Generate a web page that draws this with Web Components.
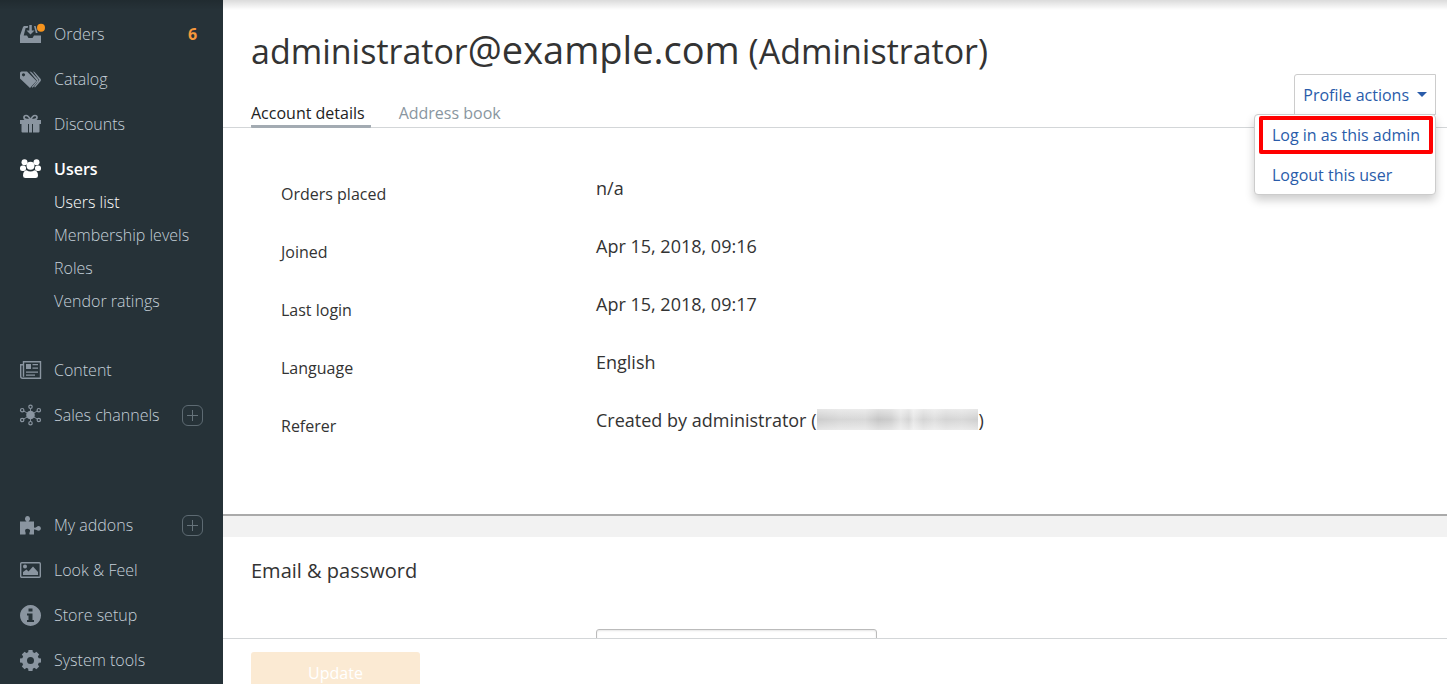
<!DOCTYPE html>
<html lang="en">
<head>
<meta charset="utf-8">
<title>User profile</title>
<style>
  body { margin: 0; font-family: "Open Sans", sans-serif; font-size: 16px; color: #333; background: #fff; }
</style>
</head>
<body>
<admin-app></admin-app>

<script>
const define = (name, html, setup) => {
  const tpl = document.createElement('template');
  tpl.innerHTML = html;
  customElements.define(name, class extends HTMLElement {
    constructor() {
      super();
      this.attachShadow({ mode: 'open' }).append(tpl.content.cloneNode(true));
    }
    connectedCallback() { if (setup) setup(this, this.shadowRoot); }
  });
};

const icons = {
  orders: '<path d="M4 2h4.200L7.600 4H5.600L3.700 11.500H7l1.500 2.500h4L14 11.500h7v7.500H0v-7.500L3 3zM9.300 1h2.500v5.500H14.500L10.500 10.500 6.500 6.500h2.800z"/><path d="M14 2h1.600l2 7h-1.800z"/><circle cx="21" cy="3.700" r="4" fill="#f7941d"/>',
  catalog: '<path fill-rule="evenodd" d="M0 4Q0 2.500 1.500 2.500H7L16.500 12 10 19 0 9.500zM3.500 4.200a1.600 1.600 0 1 0 .01 0z"/><path d="M9.500 2.500q1.500 0 2.700 1.200l5.800 6.300q1.300 1.300 0 2.800L12.500 18.800l-.800-.8L17 11.800z"/><path d="M13 2.500q1.200 0 2.200 1.200l5.300 6q1 1.200 0 2.500L15 18.500l-.800-.8L19.300 11z"/>',
  discounts: '<path d="M0 6h9v4H0zM12 6h9v4h-9zM1.500 10H8v8.500H2.500q-1 0-1-1zM13 10h6.500v7.500q0 1-1 1H13zM9 6h3v12.500H9z"/><path fill="#263238" d="M8 10h1v7H8zM12 10h1v7h-1z"/><path d="M10.500 6Q8.500 1.500 6 1.500q-2 0-2 2T7 5.500h7q3 0 3-2t-2-2q-2.500 0-4.500 4.500" fill="none" stroke="currentColor" stroke-width="1.700"/>',
  users: '<circle cx="4.500" cy="3.200" r="3"/><circle cx="16.500" cy="3.200" r="3"/><rect x="0" y="6.500" width="6" height="5.500" rx="2.500"/><rect x="15" y="6.500" width="6" height="5.500" rx="2.500"/><circle cx="10.500" cy="6.700" r="4"/><path d="M6.500 11.200q4 2.500 8 0 3.500.5 3.500 5.500 0 2.300-2.500 2.300h-10Q3 19 3 16.700 3 11.700 6.500 11.200z"/>',
  content: '<path d="M3.500 1.700h17v16.600h-18q-1.800 0-1.800-2V4.700h2.800zM3.500 4.700v12" fill="none" stroke="currentColor" stroke-width="1.400"/><path d="M6 4h5v5H6zM12.500 4H18v1.300h-5.500zM12.500 7.500H18v1.300h-5.500zM6 11.500h12v1.300H6zM6 14.500h9v1.300H6z"/>',
  channels: '<circle cx="10.500" cy="10" r="4.300"/><path d="M10.500 10V3M10.500 10V17M10.500 10L3 5.500M10.500 10L18 5.500M10.500 10L3 14.500M10.500 10L18 14.500" stroke="currentColor" stroke-width=".9"/><g fill="#263238" stroke="currentColor" stroke-width="1.200"><circle cx="10.500" cy="1.800" r="1.700"/><circle cx="10.500" cy="18.200" r="1.700"/><circle cx="2.200" cy="5.200" r="1.700"/><circle cx="18.800" cy="5.200" r="1.700"/><circle cx="2.200" cy="15" r="1.700"/><circle cx="18.800" cy="15" r="1.700"/></g>',
  addons: '<path d="M0 6.500h6.500Q4.500 5 5 3.200 5.500 1 7.500 1T10 3.200Q10.500 5 8.500 6.500H14v6q1.500.500 2.500-.500 2-1.800 3.800-.3 1.200 1.300.2 3-1.600 1.800-4 .3-1-.8-2.500-.5v5H9.500q-.5-1.500.3-2.500 1-2.500-1.300-3-.500-.200-1-.200-3 .3-2.300 2.800.8 1.400.3 2.900H0z"/>',
  look: '<rect x=".700" y="2.700" width="19.600" height="14.600" rx="1" fill="none" stroke="currentColor" stroke-width="1.400"/><circle cx="5" cy="6.500" r="2"/><path d="M3 15v-3L6.500 9.500l2 2 4.500-5 5 5.500v3z"/>',
  info: '<path fill-rule="evenodd" d="M10.500 0a10.500 10.500 0 1 0 .01 0zM8.500 3.500h4v3h-4zM7 8.500h5.500V15H14v2H7v-2h1.500v-4.500H7z"/>',
  gear: '<circle cx="10.500" cy="10.500" r="6" fill="none" stroke="currentColor" stroke-width="5"/><path d="M8.500 0h4l.6 4H7.900zM8.500 21h4l.6-4H7.900zM0 8.500v4l4 .6V7.900zM21 8.500v4l-4 .6V7.900zM1.800 4.600l2.800-2.800L8 4.300 4.300 8zM19.200 4.600l-2.800-2.800L13 4.300 16.700 8zM1.800 16.400l2.800 2.800L8 16.700 4.300 13zM19.200 16.400l-2.800 2.800L13 16.700l3.700-3.700z"/>'
};

define('nav-icon', `
  <style>
    :host { display: block; width: 21px; height: 21px; color: #8a95a0; }
    :host([active]) { color: #fff; }
    svg { display: block; overflow: visible; }
  </style>
  <svg width="21" height="21" viewBox="0 0 21 21" fill="currentColor" aria-hidden="true"></svg>`,
  (el, root) => { root.querySelector('svg').innerHTML = icons[el.getAttribute('name')]; });

define('nav-item', `
  <style>
    :host { display: block; }
    .row { display: flex; align-items: center; height: 33px; padding: 0 20px; }
    a { display: flex; align-items: center; gap: 13px; flex: 1; line-height: 33px; color: #c5d0d8; font-weight: 300; text-decoration: none; white-space: nowrap; }
    :host([active]) a { color: #fff; font-weight: 600; }
  </style>
  <div class="row"><a href="#"><nav-icon></nav-icon><span><slot></slot></span></a><slot name="end"></slot></div>
  <slot name="children"></slot>`,
  (el, root) => {
    const icon = root.querySelector('nav-icon');
    icon.setAttribute('name', el.getAttribute('icon'));
    icon.toggleAttribute('active', el.hasAttribute('active'));
    icon.connectedCallback();
  });

define('sub-item', `
  <style>
    :host { display: block; padding-left: 54px; line-height: 33px; font-weight: 300; }
    a { color: #c5d0d8; text-decoration: none; }
    :host([active]) a { color: #fff; }
  </style>
  <a href="#"><slot></slot></a>`);

define('add-button', `
  <style>
    :host { display: block; }
    button { display: grid; place-items: center; width: 21px; height: 21px; box-sizing: border-box; padding: 0; border: 1px solid #5d6a72; border-radius: 6px; background: none; color: #66737b; }
    svg { display: block; }
  </style>
  <button type="button" aria-label="Add"><svg width="11" height="11" viewBox="0 0 11 11" stroke="currentColor"><path d="M5.500 0v11M0 5.500h11"/></svg></button>`);

define('side-nav', `
  <style>
    :host { display: block; box-sizing: border-box; padding-top: 18px; background: #263238; overflow: hidden; }
    nav { display: flex; flex-direction: column; gap: 12px; }
    .group { margin-top: 24px; }
    .tools { margin-top: 65px; }
    b { width: 21px; padding-bottom: 2px; text-align: center; font-weight: 700; color: #f7983c; }
  </style>
  <nav aria-label="Main">
    <nav-item icon="orders">Orders<b slot="end">6</b></nav-item>
    <nav-item icon="catalog">Catalog</nav-item>
    <nav-item icon="discounts">Discounts</nav-item>
    <nav-item icon="users" active>Users
      <div slot="children">
        <sub-item active>Users list</sub-item>
        <sub-item>Membership levels</sub-item>
        <sub-item>Roles</sub-item>
        <sub-item>Vendor ratings</sub-item>
      </div>
    </nav-item>
    <nav-item class="group" icon="content">Content</nav-item>
    <nav-item icon="channels">Sales channels<add-button slot="end"></add-button></nav-item>
    <nav-item class="tools" icon="addons">My addons<add-button slot="end"></add-button></nav-item>
    <nav-item icon="look">Look &amp; Feel</nav-item>
    <nav-item icon="info">Store setup</nav-item>
    <nav-item icon="gear">System tools</nav-item>
  </nav>`);

define('profile-menu', `
  <style>
    :host { display: block; position: relative; }
    button { display: flex; align-items: center; gap: 8px; height: 41px; box-sizing: border-box; padding: 0 8px; border: 1px solid #ccc; border-radius: 3px 0 0 0; background: #fff; font: inherit; color: #2a5caa; white-space: nowrap; }
    i { border: 5px solid transparent; border-top-color: currentColor; border-bottom: 0; }
    .menu { position: absolute; top: 40px; right: 0; width: 182px; box-sizing: border-box; padding: 1px 2px 0; display: grid; gap: 2px; border: 1px solid #ccc; border-radius: 4px; background: #fff; box-shadow: 0 5px 10px rgba(0,0,0,.2); }
    a { display: block; box-sizing: border-box; height: 38px; margin: 0 0 0 2px; padding: 0 9px; border: 4px solid transparent; line-height: 30px; color: #2a5caa; text-decoration: none; white-space: nowrap; }
    a.marked { border-color: #f00; border-radius: 2px; }
  </style>
  <button type="button" aria-haspopup="true" aria-expanded="true">Profile actions<i></i></button>
  <div class="menu"><a class="marked" href="#">Log in as this admin</a><a href="#">Logout this user</a></div>`);

define('page-header', `
  <style>
    :host { display: flex; justify-content: space-between; height: 128px; box-sizing: border-box; padding: 0 11px 0 28px; border-bottom: 1px solid #d3d6d8; }
    .left { display: flex; flex-direction: column; justify-content: space-between; }
    h1 { margin: 23px 0 0; font-size: 34px; line-height: 52px; font-weight: 400; color: #333; white-space: nowrap; }
    .domain { font-size: 38px; }
    nav { display: flex; gap: 28px; margin-bottom: -1px; }
    a { line-height: 24px; border-bottom: 3px solid transparent; color: #8996a0; text-decoration: none; }
    a[aria-current] { padding-right: 6px; border-color: #a3abb2; border-radius: 1px; color: #222; font-weight: 500; }
    profile-menu { margin-top: 74px; }
  </style>
  <div class="left">
    <h1>administrator<span class="domain">@example.com</span> (Administrator)</h1>
    <nav aria-label="Profile"><a href="#" aria-current="page">Account details</a><a href="#">Address book</a></nav>
  </div>
  <profile-menu></profile-menu>`);

define('detail-row', `
  <style>
    :host { display: grid; grid-template-columns: 315px 1fr; height: 58px; }
    .label { padding-top: 6px; line-height: 24px; }
    .value { font-size: 18px; line-height: 24px; }
  </style>
  <div class="label"><slot name="label"></slot></div><div class="value"><slot></slot></div>`);

define('hidden-address', `
  <style>
    :host { display: inline-block; width: 161px; height: 21px; margin-left: 1px; vertical-align: -3px;
      background: linear-gradient(rgba(255,255,255,.5), transparent 50%, rgba(255,255,255,.5)),
        linear-gradient(90deg, #ccc, #d6d6d6 14%, #d8d8d8 30%, #c6c6c6 38%, #cdcdcd 46%, #e2e2e2 52%, #d4d4d4 57%, #e6e6e6 60%, #d4d4d4 66%, #dedede 73%, #d4d4d4 80%, #d8d8d8 90%, #cfcfcf); }
  </style>`);

define('account-page', `
  <style>
    :host { display: flex; flex-direction: column; min-width: 0; min-height: 0; }
    main { flex: 1; min-height: 0; overflow: hidden; }
    .details { box-sizing: border-box; padding: 48px 58px; border-bottom: 2px solid #aaa; }
    .band { height: 21px; background: #f2f2f2; }
    .password { padding: 20px 28px; }
    h2 { margin: 0 0 44px; font-size: 20px; line-height: 28px; font-weight: 400; }
    input { display: block; box-sizing: border-box; width: 281px; height: 40px; margin-left: 345px; border: 1px solid #bbb; border-radius: 3px; box-shadow: inset 0 1px 2px rgba(0,0,0,.1); }
    footer { flex: none; box-sizing: border-box; height: 46px; padding: 13px 28px 0; border-top: 1px solid #d3d6d8; overflow: hidden; }
    button { width: 169px; height: 42px; padding: 0; border: 0; border-radius: 3px; background: #fbead3; color: #fff; font: inherit; }
  </style>
  <main>
    <page-header></page-header>
    <section class="details">
      <detail-row><span slot="label">Orders placed</span>n/a</detail-row>
      <detail-row><span slot="label">Joined</span>Apr 15, 2018, 09:16</detail-row>
      <detail-row><span slot="label">Last login</span>Apr 15, 2018, 09:17</detail-row>
      <detail-row><span slot="label">Language</span>English</detail-row>
      <detail-row><span slot="label">Referer</span>Created by administrator (<hidden-address></hidden-address>)</detail-row>
    </section>
    <div class="band"></div>
    <section class="password">
      <h2>Email &amp; password</h2>
      <input type="email" aria-label="Email">
    </section>
  </main>
  <footer><button type="button">Update</button></footer>`);

define('admin-app', `
  <style>
    :host { display: grid; grid-template: minmax(0, 1fr) / 223px minmax(0, 1fr); height: 100vh; position: relative; overflow: hidden; }
    :host::before { content: ""; position: absolute; top: 0; left: 0; right: 0; height: 10px; z-index: 1; background: linear-gradient(rgba(0,0,0,.14), transparent); }
  </style>
  <side-nav></side-nav>
  <account-page></account-page>`);
</script>
</body>
</html>
